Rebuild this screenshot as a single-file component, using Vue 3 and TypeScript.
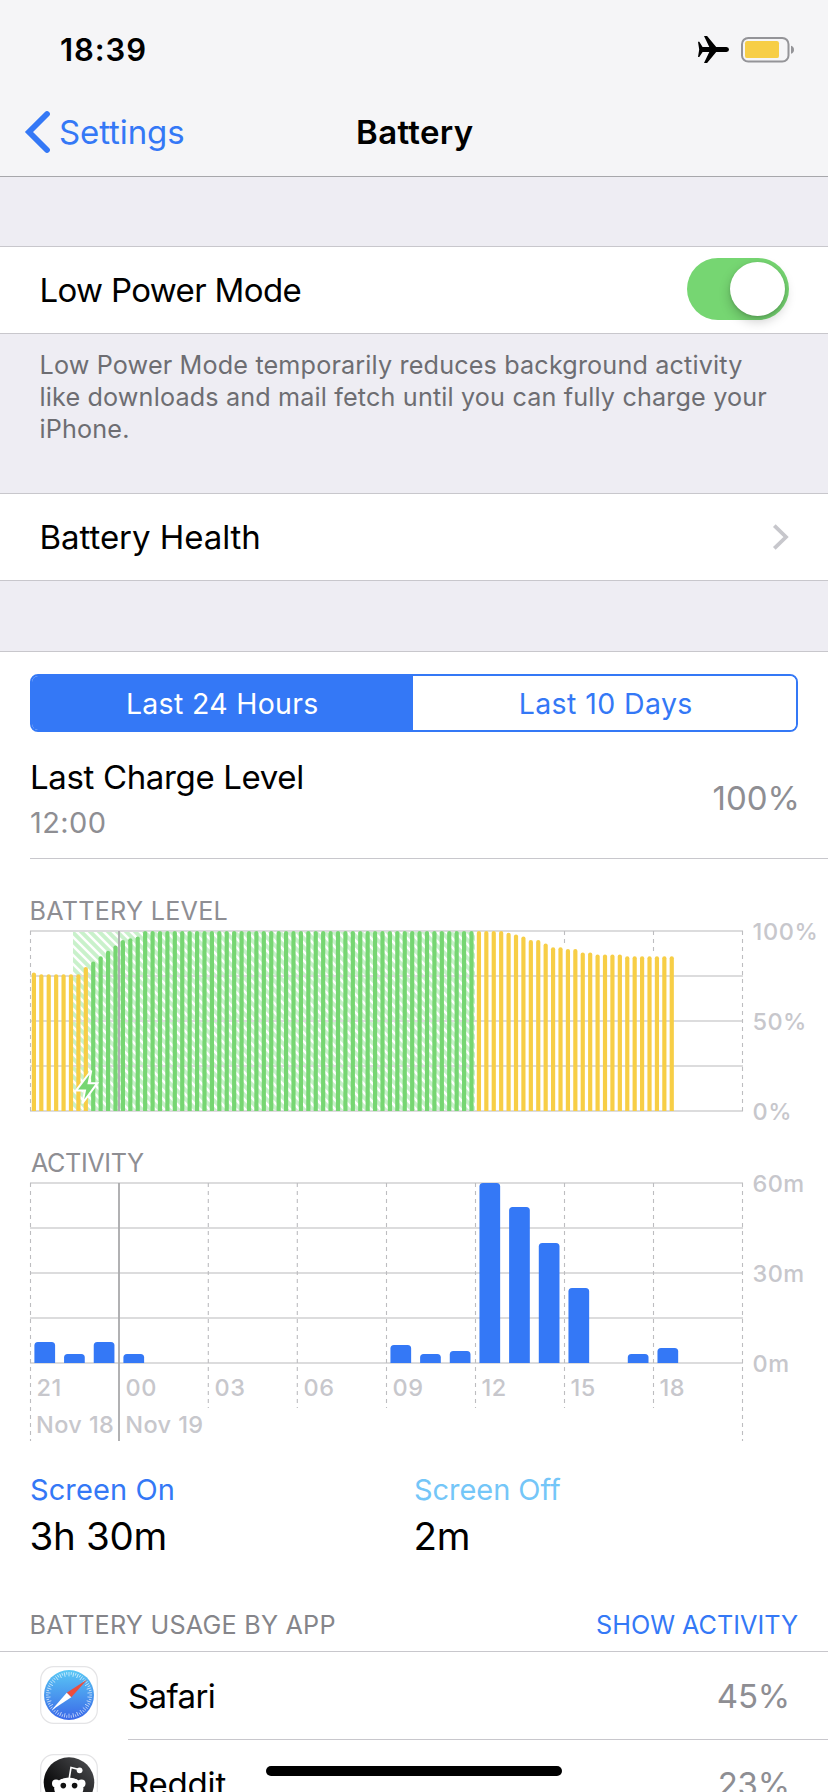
<script setup lang="ts">
type LevelBar = { x: number; y: number; charging: boolean }

const levels: number[] = [
  77, 76, 76, 76, 76, 76, 76, 80, 83, 86, 89, 92, 95, 96, 97,
  ...Array<number>(49).fill(100),
  99, 98, 97, 95, 95, 93, 91, 91, 90, 90, 88, 88, 87, 87, 87, 87,
  86, 86, 86, 86, 86, 86, 86,
]

const levelBars: LevelBar[] = levels.map((value, i) => ({
  x: 31.8 + i * 7.417,
  y: 1111 - value * 1.8,
  charging: i >= 8 && i <= 59,
}))

const minutes: number[] = [7, 3, 7, 3, 0, 0, 0, 0, 0, 0, 0, 0, 6, 3, 4, 60, 52, 40, 25, 0, 3, 5]

const activityBars = minutes
  .map((value, i) => ({ x: 34.4 + i * 29.67, top: 1363 - value * 3, value }))
  .filter((bar) => bar.value > 0)
  .map((bar) => ({
    key: bar.x,
    d: `M${bar.x} 1363V${bar.top + 3.5}q0-3.5 3.5-3.5h13.7q3.5 0 3.5 3.5V1363z`,
  }))

const gridX: number[] = [30.5, 208.3, 297.3, 386.5, 475.5, 564.5, 653.5, 742.5]
const hours = ['21', '00', '03', '06', '09', '12', '15', '18'].map((label, i) => ({ label, x: 36.4 + i * 89 }))
const ticks = Array.from({ length: 60 }, (_, i) => i * 6)
</script>

<template>
  <main class="screen">
    <header class="top">
      <div class="status">
        <span class="time">18:39</span>
        <svg class="plane" width="31" height="27" viewBox="0 0 31 27">
          <path d="M0 5.8h1.3L4.6 11H11.3L6 0h3.1L18.2 11H28.4Q31 11.2 31 13.4T28.4 15.9H18.2L9.1 27H6L11.3 15.9H4.6L1.3 21H0L1.2 13.4z" />
        </svg>
        <svg class="cell" width="54" height="26" viewBox="0 0 54 26">
          <rect x="1" y="1" width="46.5" height="23.6" rx="6.2" fill="none" stroke="#949498" stroke-width="2" />
          <rect x="4" y="4.1" width="34" height="17" rx="2.2" fill="#f7ce46" />
          <path d="M50 8.8q3 .9 3 4t-3 4z" fill="#949498" />
        </svg>
      </div>
      <nav class="nav">
        <a class="back">
          <svg width="26" height="44" viewBox="0 0 26 44"><path d="M23 4L5 22L23 40" fill="none" stroke="#3478f6" stroke-width="5.8" stroke-linecap="round" stroke-linejoin="miter" /></svg>
          <span>Settings</span>
        </a>
        <h1>Battery</h1>
      </nav>
    </header>

    <section class="row power">
      <span class="low">Low Power Mode</span>
      <span class="switch"><i></i></span>
    </section>
    <p class="note">Low Power Mode temporarily reduces background activity<br>like downloads and mail fetch until you can fully charge your<br>iPhone.</p>

    <section class="row health">
      <span>Battery Health</span>
      <svg width="17" height="26" viewBox="0 0 17 26"><path d="M2.3 1.6L14 13L2.3 24.4" fill="none" stroke="#c7c7cc" stroke-width="3.8" /></svg>
    </section>

    <section class="panel">
      <div class="segments">
        <button class="on">Last 24 Hours</button>
        <button>Last 10 Days</button>
      </div>

      <div class="charge">
        <div>
          <div class="charge-title">Last Charge Level</div>
          <div class="charge-time">12:00</div>
        </div>
        <div class="charge-value">100%</div>
      </div>

      <h2 class="level-title">BATTERY LEVEL</h2>
      <svg class="chart" width="828" height="228" viewBox="0 914 828 228">
        <defs>
          <pattern id="hatch" width="9" height="9" patternUnits="userSpaceOnUse" patternTransform="translate(73 937)">
            <rect width="9" height="9" fill="#c9f1cb" />
            <path d="M-9 -9L18 18M-9 0L9 18M0 -9L18 9" stroke="#fff" stroke-width="2.5" />
          </pattern>
        </defs>
        <rect x="73" y="931" width="402" height="180" fill="url(#hatch)" />
        <path d="M30 931H743M30 976H743M30 1021H743M30 1066H743M30 1111H743" class="grid" />
        <path d="M30.5 931V1111M564.5 931V947M653.5 931V955M742.5 931V1111" class="dash" />
        <path d="M119 931V1111" class="midnight" />
        <path
          v-for="bar in levelBars"
          :key="bar.x"
          :d="`M${bar.x} 1111V${bar.y + 2}q0-2 2.1-2t2.1 2V1111z`"
          :fill="bar.charging ? '#76d672' : '#f7ce46'"
        />
        <path d="M91.3 1070.5L76 1090.6H85L82.3 1103.5L97.3 1083.2H88.6z" fill="#76d672" stroke="#fff" stroke-width="2" />
        <text x="752.6" y="940" class="axis wide">100%</text>
        <text x="752.6" y="1030" class="axis">50%</text>
        <text x="752.6" y="1120" class="axis">0%</text>
      </svg>

      <h2 class="activity-title">ACTIVITY</h2>
      <svg class="chart" width="828" height="290" viewBox="0 1166 828 290">
        <path d="M30 1183H743M30 1228H743M30 1273H743M30 1318H743M30 1363H743" class="grid" />
        <path
          v-for="(x, i) in gridX"
          :key="x"
          :d="`M${x} 1183V${i === 0 || i === 7 ? 1441 : 1408}`"
          class="dash"
        />
        <path d="M119 1183V1441" class="midnight" />
        <path v-for="bar in activityBars" :key="bar.key" :d="bar.d" fill="#3478f6" />
        <text x="752.6" y="1192" class="axis">60m</text>
        <text x="752.6" y="1282" class="axis">30m</text>
        <text x="752.6" y="1372" class="axis">0m</text>
        <text v-for="h in hours" :key="h.label" :x="h.x" y="1396" class="axis wide">{{ h.label }}</text>
        <text x="36" y="1432.6" class="axis">Nov 18</text>
        <text x="125.3" y="1432.6" class="axis">Nov 19</text>
      </svg>

      <div class="totals">
        <div><div class="label on-label">Screen On</div><div class="value">3h 30m</div></div>
        <div><div class="label off-label">Screen Off</div><div class="value">2m</div></div>
      </div>

      <div class="usage-head">
        <span class="usage-title">BATTERY USAGE BY APP</span>
        <a>SHOW ACTIVITY</a>
      </div>

      <div class="app">
        <svg class="icon" width="58" height="58" viewBox="0 0 58 58">
          <defs>
            <linearGradient id="sky" x1="0" y1="0" x2="0" y2="1"><stop offset="0" stop-color="#5ac8f5" /><stop offset="1" stop-color="#3a68e8" /></linearGradient>
          </defs>
          <rect x=".7" y=".7" width="56.6" height="56.6" rx="13" fill="#fff" stroke="#e4e4e6" stroke-width="1.2" />
          <circle cx="29" cy="29" r="25" fill="url(#sky)" />
          <path v-for="t in ticks" :key="t" :d="t % 12 ? 'M29 6v2.6' : 'M29 6v4.4'" :transform="`rotate(${t} 29 29)`" stroke="#fff" stroke-opacity=".75" stroke-width=".8" />
          <path d="M47.2 13.6L26.7 26.7L31.3 31.3z" fill="#ec4d3d" />
          <path d="M11.5 44.2L26.7 26.7L31.3 31.3z" fill="#fff" />
        </svg>
        <div class="app-body"><span class="name safari">Safari</span><span class="share">45%</span></div>
      </div>

      <div class="app">
        <svg class="icon" width="58" height="58" viewBox="0 0 58 58">
          <defs>
            <linearGradient id="night" x1=".2" y1=".6" x2=".8" y2="0"><stop offset="0" stop-color="#0c0c0d" /><stop offset="1" stop-color="#48494c" /></linearGradient>
          </defs>
          <rect x=".7" y=".7" width="56.6" height="56.6" rx="13" fill="#fff" stroke="#e4e4e6" stroke-width="1.2" />
          <circle cx="29" cy="28.5" r="25.3" fill="url(#night)" />
          <path d="M29.3 24L31 13.5L38 15.2" fill="none" stroke="#fff" stroke-width="1.6" />
          <circle cx="39.6" cy="16.3" r="2.9" fill="#fff" />
          <circle cx="16" cy="29.5" r="4" fill="#fff" />
          <circle cx="41.5" cy="29.5" r="4" fill="#fff" />
          <ellipse cx="28.8" cy="34.5" rx="14.6" ry="11" fill="#fff" />
          <circle cx="23.3" cy="31.6" r="2.8" fill="#111" />
          <circle cx="34.6" cy="31.6" r="2.8" fill="#111" />
          <path d="M23 39.5q6 4 12 0" fill="none" stroke="#111" stroke-width="1.5" />
        </svg>
        <div class="app-body"><span class="name">Reddit</span><span class="share">23%</span></div>
      </div>
    </section>
    <div class="home"></div>
  </main>
</template>

<style>
body { margin: 0; overflow: hidden; }
</style>

<style scoped>
.screen {
  position: relative;
  width: 828px;
  height: 1792px;
  overflow: hidden;
  background: #eeedf3;
  color: #000;
  font-family: "Inter", "Liberation Sans", sans-serif;
  font-size: 33px;
  line-height: 40px;
  white-space: nowrap;
}
.top { height: 176px; background: #f5f5f7; border-bottom: 1px solid #a7a7ab; }
.status { display: flex; align-items: flex-start; height: 88px; padding: 0 33px 0 60px; }
.time { margin: 30px auto 0 0; font-size: 31px; font-weight: 600; letter-spacing: 0.9px; }
.plane { margin: 36px 12px 0 0; }
.cell { margin-top: 37px; }
.nav { display: grid; grid-template-columns: 1fr auto 1fr; align-items: center; height: 88px; }
.back { display: flex; align-items: center; padding-left: 24px; color: #3478f6; letter-spacing: -0.1px; }
.back span { margin-left: 9px; }
h1 { margin: 0 0 0 1.5px; font-size: 33px; font-weight: 600; letter-spacing: 0.3px; }

.row { display: flex; align-items: center; justify-content: space-between; height: 86px; padding: 0 39.5px 0 39.5px; background: #fff; border-top: 1px solid #c8c7cc; border-bottom: 1px solid #c8c7cc; }
.power { margin-top: 69px; }
.low { letter-spacing: -0.65px; }
.health { letter-spacing: -0.05px; }
.switch { display: flex; justify-content: flex-end; width: 94px; height: 54px; padding: 4px; border-radius: 31px; background: #76d672; margin-bottom: 2px; }
.switch i { width: 55px; height: 54px; border-radius: 50%; background: #fff; box-shadow: 0 5px 12px rgba(0, 0, 0, 0.22), 0 1px 3px rgba(0, 0, 0, 0.14); }
.note { height: 144px; margin: 0; padding: 15px 0 0 39.5px; font-size: 25.2px; line-height: 32px; letter-spacing: 0.15px; color: #6d6d72; }

.panel { margin-top: 70px; border-top: 1px solid #c8c7cc; background: #fff; height: 1200px; }
.segments { display: flex; box-sizing: border-box; height: 58px; margin: 22px 30px 0; border: 2px solid #3478f6; border-radius: 8px; overflow: hidden; }
.segments button { flex: 1; padding: 1px 0 0 3px; border: 0; background: #fff; color: #3478f6; font: 28.5px/54px "Inter", sans-serif; letter-spacing: 0.4px; }
.segments .on { padding-left: 0; background: #3478f6; color: #fff; letter-spacing: 0.3px; }
.charge { display: flex; justify-content: space-between; height: 126px; margin-left: 30px; padding-right: 28px; border-bottom: 1px solid #c8c7cc; }
.charge-title { margin-top: 25px; letter-spacing: -0.35px; }
.charge-time { margin-top: 6px; font-size: 29px; letter-spacing: 0.4px; color: #8e8e93; }
.charge-value { margin-top: 46px; letter-spacing: 0; color: #8e8e93; }
h2 { margin: 0 0 0 29.5px; font-size: 25.2px; line-height: 30px; font-weight: 400; color: #8e8e93; }
.level-title { margin-top: 37px; letter-spacing: 0.25px; }
.activity-title { margin-top: 18px; margin-left: 31px; letter-spacing: -0.4px; }
.chart { display: block; margin: -12px 0; }
.grid { stroke: #dcdcdd; stroke-width: 2; }
.dash { stroke: #bdbdc0; stroke-width: 1.1; stroke-dasharray: 4 4; }
.midnight { stroke: #a9a9ab; stroke-width: 1.8; }
.axis { fill: #c7c7cc; font-size: 23.5px; font-weight: 500; letter-spacing: 0.4px; }
.wide { letter-spacing: 0.6px; }

.totals { display: grid; grid-template-columns: 384px 1fr; margin: 27.5px 0 0 30px; }
.label { font-size: 29px; line-height: 36px; }
.on-label { color: #3478f6; letter-spacing: 0.1px; }
.off-label { color: #74c6f8; letter-spacing: -0.05px; }
.value { margin: 4px 0 0 -0.5px; font-size: 38.5px; line-height: 48px; letter-spacing: -0.3px; }
.usage-head { display: flex; justify-content: space-between; margin-top: 50.5px; padding: 0 30px 11px 29.5px; border-bottom: 1px solid #c8c7cc; font-size: 25.2px; line-height: 30px; }
.usage-title { color: #85858a; letter-spacing: 0.22px; }
.usage-head a { color: #3478f6; }
.app { display: flex; align-items: center; height: 88px; padding-left: 40px; }
.icon { margin-top: -2px; }
.app-body { flex: 1; display: flex; align-items: center; justify-content: space-between; height: 87px; margin-left: 30px; padding: 0 38px 0 0; border-bottom: 1px solid #c8c7cc; }
.name { letter-spacing: -0.2px; }
.safari { letter-spacing: -0.6px; }
.share { color: #8e8e93; letter-spacing: -0.2px; }
.home { position: absolute; left: 266px; top: 1766px; width: 296px; height: 10px; border-radius: 5px; background: #000; }
</style>
